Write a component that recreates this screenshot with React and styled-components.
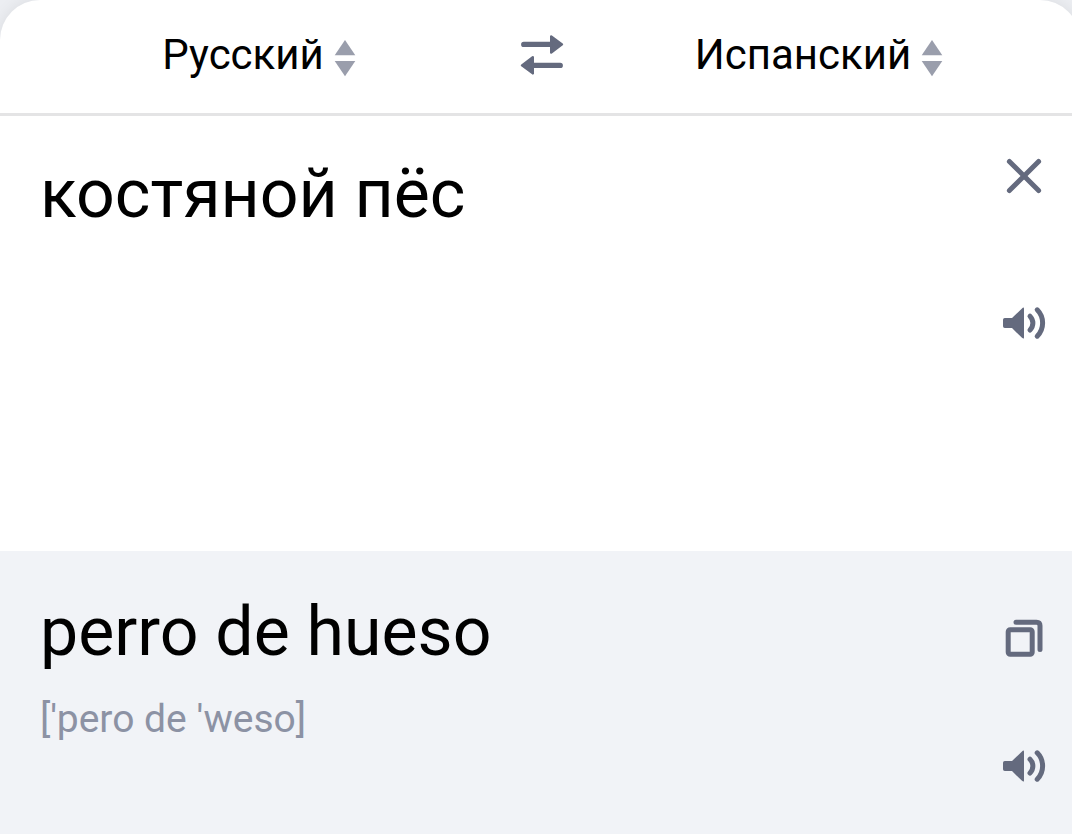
import { useState } from "react";
import styled, { createGlobalStyle } from "styled-components";

const GlobalStyle = createGlobalStyle`
  * {
    box-sizing: border-box;
  }
  body {
    margin: 0;
    background-color: #eceef2;
    color: #000000;
    font-family: Roboto, sans-serif;
    overflow-x: hidden;
  }
`;
const Card = styled.main`
  min-height: 100vh;
  margin-right: -8px;
  display: grid;
  grid-template-rows: auto 1fr auto;
  background-color: #ffffff;
  border-radius: 40px 40px 0 0;
  box-shadow: 0 0 16px rgba(0, 0, 0, 0.08);
  overflow: hidden;
`;
const Header = styled.header`
  display: grid;
  grid-template-columns: 1fr 44px 1fr;
  align-items: center;
  padding: 30px 0 33px 4px;
  border-bottom: 3px solid #e4e4e5;
`;
const Language = styled.div`
  display: flex;
  align-items: center;
  justify-content: center;
  gap: 10px;
  padding-right: 6px;
`;
const LanguageSelect = styled.select`
  appearance: none;
  field-sizing: content;
  height: 50px;
  padding: 0;
  border: none;
  background: none;
  color: inherit;
  font-family: inherit;
  font-size: 42px;
  line-height: 50px;
  cursor: pointer;
`;
const IconButton = styled.button`
  display: flex;
  align-items: center;
  justify-content: center;
  width: ${(props) => props.$size}px;
  height: ${(props) => props.$size}px;
  padding: 0;
  border: none;
  background: none;
  color: #646a7e;
  cursor: pointer;
`;
const Panel = styled.section`
  display: flex;
  justify-content: space-between;
  gap: 24px;
  padding: 0 32px 44px 40px;
  background-color: ${(props) => (props.$tinted ? "#f1f3f7" : "#ffffff")};
`;
const PanelText = styled.div`
  flex: 1;
  display: flex;
  flex-direction: column;
  gap: 24px;
  padding-top: ${(props) => (props.$tinted ? 41 : 38)}px;
`;
const SourceInput = styled.textarea`
  flex: 1;
  width: 100%;
  min-height: 160px;
  padding: 0;
  border: none;
  outline: none;
  resize: none;
  background: none;
  color: inherit;
  font-family: inherit;
  font-size: 68px;
  line-height: 80px;
`;
const Translation = styled.p`
  margin: 0;
  font-size: 68px;
  line-height: 80px;
`;
const Transcription = styled.p`
  margin: 0;
  color: #8c92a4;
  font-size: 39px;
  line-height: 46px;
`;
const Actions = styled.div`
  display: flex;
  flex-direction: column;
  gap: ${(props) => props.$gap}px;
  padding-top: ${(props) => props.$top}px;
`;

function CaretIcon() {
  return (
    <svg width="22" height="44" viewBox="0 0 22 44" fill="#9a9eac" aria-hidden="true">
      <path d="M11 7L21.3 22.3H0.7z" />
      <path d="M11 43.3L21.3 28H0.7z" />
    </svg>
  );
}

function SwapIcon() {
  return (
    <svg width="44" height="44" viewBox="0 0 44 44" fill="currentColor" aria-hidden="true">
      <path
        d="M3.7 11.4H32M40.3 32.4H12"
        stroke="currentColor"
        strokeWidth="5.2"
        strokeLinecap="round"
      />
      <path
        d="M31.2 3.4L42 11.4L31.2 19.6zM12.8 24.2L2 32.4L12.8 40.4z"
        stroke="currentColor"
        strokeWidth="2.4"
        strokeLinejoin="round"
      />
    </svg>
  );
}

function CloseIcon() {
  return (
    <svg width="48" height="48" viewBox="0 0 48 48" fill="none" aria-hidden="true">
      <path
        d="M9.4 9.4L38.6 38.6M38.6 9.4L9.4 38.6"
        stroke="currentColor"
        strokeWidth="5"
        strokeLinecap="round"
      />
    </svg>
  );
}

function SpeakerIcon() {
  return (
    <svg width="48" height="48" viewBox="0 0 48 48" fill="none" aria-hidden="true">
      <path
        d="M4.8 19H12L22 9.4Q24 7.6 24 9.8V38.4Q24 40.6 22 38.8L12 29H4.8Q3 29 3 27.2V20.8Q3 19 4.8 19z"
        fill="currentColor"
      />
      <path
        d="M30 17.2A9.7 9.7 0 0 1 30 31M37.2 10.8A18.8 18.8 0 0 1 37.2 37.2"
        stroke="currentColor"
        strokeWidth="5"
        strokeLinecap="round"
      />
    </svg>
  );
}

function CopyIcon() {
  return (
    <svg
      width="48"
      height="48"
      viewBox="0 0 48 48"
      fill="none"
      stroke="currentColor"
      strokeWidth="5"
      aria-hidden="true"
    >
      <rect x="8.2" y="15.8" width="24" height="24.4" rx="2" />
      <path d="M16 8.2H36.5Q40 8.2 40 11.7V35.6" strokeLinecap="round" />
    </svg>
  );
}

function App() {
  const [from, setFrom] = useState("ru");
  const [to, setTo] = useState("es");
  const [text, setText] = useState("костяной пёс");

  function handleSwap() {
    setFrom(to);
    setTo(from);
  }

  return (
    <>
      <GlobalStyle />
      <Card>
        <Header>
          <Language>
            <LanguageSelect
              aria-label="Язык оригинала"
              value={from}
              onChange={(e) => setFrom(e.target.value)}
            >
              <option value="ru">Русский</option>
              <option value="es">Испанский</option>
            </LanguageSelect>
            <CaretIcon />
          </Language>
          <IconButton $size={44} aria-label="Поменять языки" onClick={handleSwap}>
            <SwapIcon />
          </IconButton>
          <Language>
            <LanguageSelect
              aria-label="Язык перевода"
              value={to}
              onChange={(e) => setTo(e.target.value)}
            >
              <option value="ru">Русский</option>
              <option value="es">Испанский</option>
            </LanguageSelect>
            <CaretIcon />
          </Language>
        </Header>

        <Panel>
          <PanelText>
            <SourceInput
              aria-label="Текст"
              spellCheck={false}
              value={text}
              onChange={(e) => setText(e.target.value)}
            />
          </PanelText>
          <Actions $top={36} $gap={99}>
            <IconButton $size={48} aria-label="Очистить" onClick={() => setText("")}>
              <CloseIcon />
            </IconButton>
            <IconButton $size={48} aria-label="Прослушать текст">
              <SpeakerIcon />
            </IconButton>
          </Actions>
        </Panel>

        <Panel $tinted>
          <PanelText $tinted>
            <Translation lang="es">perro de hueso</Translation>
            <Transcription>['pero de 'weso]</Transcription>
          </PanelText>
          <Actions $top={63} $gap={80}>
            <IconButton $size={48} aria-label="Копировать перевод">
              <CopyIcon />
            </IconButton>
            <IconButton $size={48} aria-label="Прослушать перевод">
              <SpeakerIcon />
            </IconButton>
          </Actions>
        </Panel>
      </Card>
    </>
  );
}
export default App;
